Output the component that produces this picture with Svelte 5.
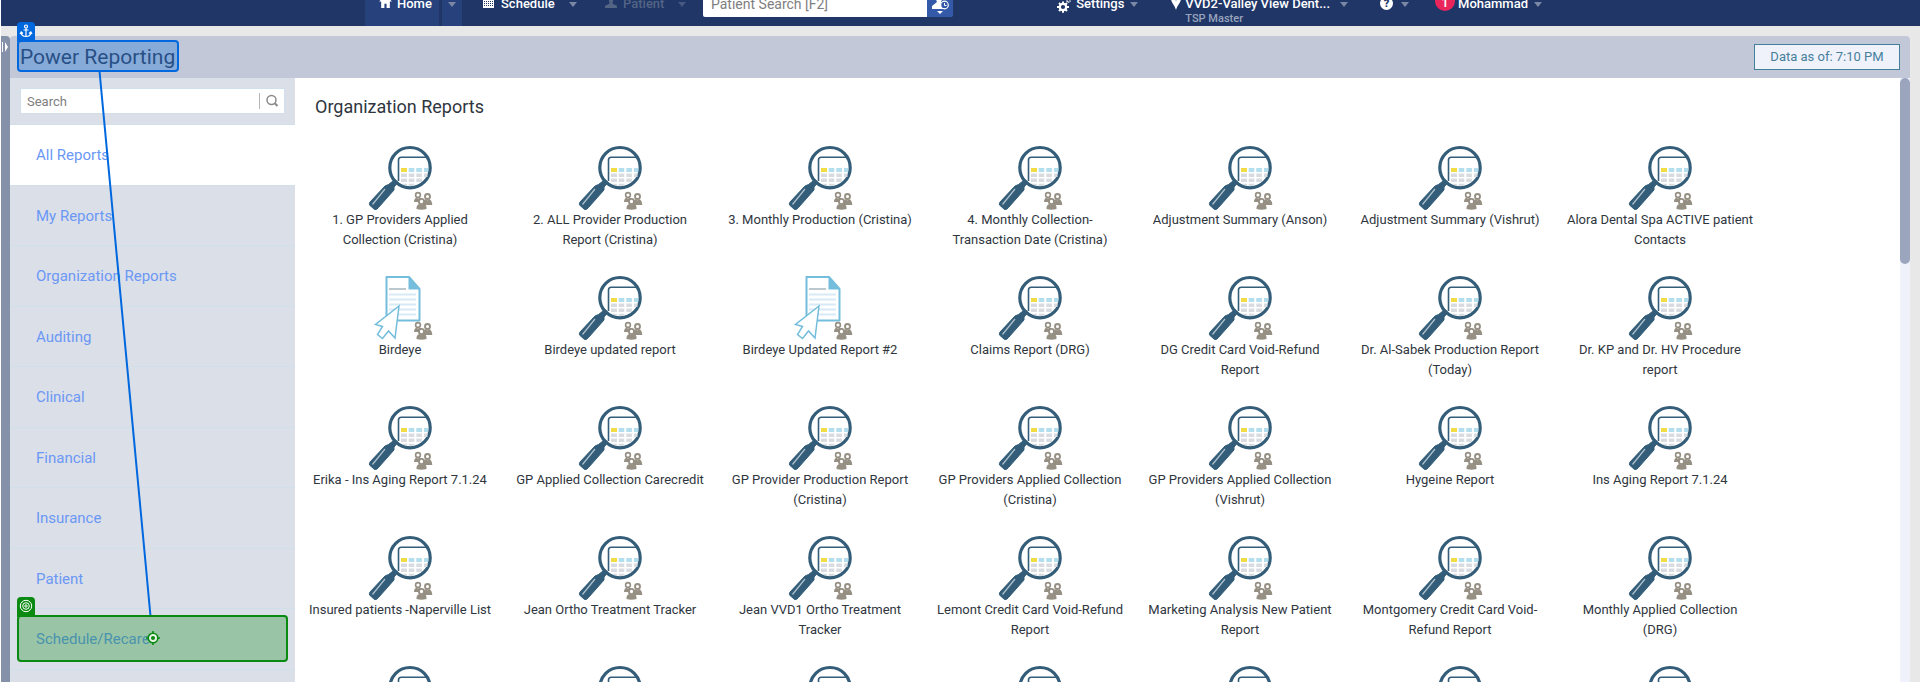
<script>
  const reports = [
    '1. GP Providers Applied Collection (Cristina)',
    '2. ALL Provider Production Report (Cristina)',
    '3. Monthly Production (Cristina)',
    '4. Monthly Collection-Transaction Date (Cristina)',
    'Adjustment Summary (Anson)',
    'Adjustment Summary (Vishrut)',
    'Alora Dental Spa ACTIVE patient Contacts',
    'Birdeye',
    'Birdeye updated report',
    'Birdeye Updated Report #2',
    'Claims Report (DRG)',
    'DG Credit Card Void-Refund Report',
    'Dr. Al-Sabek Production Report (Today)',
    'Dr. KP and Dr. HV Procedure report',
    'Erika - Ins Aging Report 7.1.24',
    'GP Applied Collection Carecredit',
    'GP Provider Production Report (Cristina)',
    'GP Providers Applied Collection (Cristina)',
    'GP Providers Applied Collection (Vishrut)',
    'Hygeine Report',
    'Ins Aging Report 7.1.24',
    'Insured patients -Naperville List',
    'Jean Ortho Treatment Tracker',
    'Jean VVD1 Ortho Treatment Tracker',
    'Lemont Credit Card Void-Refund Report',
    'Marketing Analysis New Patient Report',
    'Montgomery Credit Card Void-Refund Report',
    'Monthly Applied Collection (DRG)',
    '', '', '', '', '', '', ''
  ];
  const documents = new Set(['Birdeye', 'Birdeye Updated Report #2']);
  const categories = [
    'All Reports', 'My Reports', 'Organization Reports', 'Auditing', 'Clinical',
    'Financial', 'Insurance', 'Patient', 'Schedule/Recare', ''
  ];
  let selected = $state('All Reports');
</script>

{#snippet people()}
  <g fill="#968f83">
    <circle cx="53" cy="50" r="2.4" fill="#fff" stroke="#968f83" stroke-width="1.6" />
    <path d="M49 57q0-4 3-4.500l1 1.500 1-1.500q3 .5 3.500 4.500z" />
    <circle cx="62.500" cy="51.500" r="2.500" fill="#fff" stroke="#968f83" stroke-width="1.900" />
    <path d="M58 60q0-5 3-6l1.500 1.500L64 54q3 1 3.300 6z" />
    <circle cx="56.500" cy="56.500" r="2.600" fill="#fff" stroke="#968f83" stroke-width="1.900" />
    <path d="M51.500 64v-1.500q.5-3.500 3.500-3.500l1.500 1 1.500-1q3.500 0 3.500 3.500V64q-5 1.500-10 0z" />
  </g>
{/snippet}

<div class="app">
  <header>
    <nav class="left" aria-label="Main">
      <div class="tab home">
        <svg width="13" height="13" viewBox="0 0 12 12"><path fill="#fff" d="M6 0 0 6h2v6h3V8h2v4h3V6h2L10 4V1H9v2z" /></svg>
        <a href="#home">Home</a>
      </div>
      <button class="drop homedrop" aria-label="Home menu"></button>
      <div class="tab schedule">
        <svg width="11" height="13" viewBox="0 0 11 13"><path fill="#fff" d="M0 1h11v12H0z" /><path stroke="#1f3667" stroke-dasharray="1 1" d="M1 6.500h9M1 8.500h9M1 10.500h9" /></svg>
        <a href="#schedule">Schedule</a>
      </div>
      <button class="drop" aria-label="Schedule menu"></button>
      <div class="tab patient">
        <svg width="12" height="13" viewBox="0 0 11 12"><path fill="#536484" d="M5.500 0C3 0 3 4 4 6.500L4 8 0 10v2h11v-2L7 8V6.500C8 4 8 0 5.500 0z" /></svg>
        <a href="#patient">Patient</a>
      </div>
      <button class="drop dim" aria-label="Patient menu"></button>
      <div class="lookup">
        <input type="text" aria-label="Patient Search" placeholder="Patient Search [F2]" />
        <button aria-label="Recent patients">
          <svg width="26" height="30" viewBox="0 0 26 30"><path fill="#fff" d="M12 6c-4 0-4 5-2 9l-5 4v3h13v-6l-4-1c2-4 2-9-2-9zM10 24h6l-3 3z" /><circle cx="17.500" cy="18" r="3.800" fill="#3459a8" stroke="#fff" stroke-width="1.200" /><path fill="none" stroke="#fff" d="M17.500 16v2.500h2" /></svg>
        </button>
      </div>
    </nav>
    <nav class="right" aria-label="Account">
      <div class="tab settings">
        <svg width="14" height="16" viewBox="0 0 14 16"><circle cx="6" cy="10" r="3.200" fill="none" stroke="#fff" stroke-width="2.200" /><path stroke="#fff" stroke-width="2" d="M6 4.500v2M6 13.500v2.300M0 10h2.500M9.500 10H12M2 6l1.500 1.500M8.500 12.500 10 14M2 14l1.500-1.500M8.500 7.500 10 6" /><circle cx="11.500" cy="3.500" r="1.600" fill="none" stroke="#fff" stroke-dasharray="1 .5" stroke-width="1.500" /></svg>
        <a href="#settings">Settings</a>
      </div>
      <button class="drop" aria-label="Settings menu"></button>
      <div class="tab location">
        <svg width="10" height="17" viewBox="0 0 8 14"><path fill="#fff" fill-rule="evenodd" d="M4 0a4 4 0 0 0-4 5c0 3 3 5 4 9 1-4 4-6 4-9a4 4 0 0 0-4-5zm0 3a1.500 1.500 0 1 1 0 3 1.500 1.500 0 0 1 0-3z" /></svg>
        <div><a href="#location">VVD2-Valley View Dent...</a><small>TSP Master</small></div>
      </div>
      <button class="drop" aria-label="Location menu"></button>
      <div class="tab help"><span class="question">?</span></div>
      <button class="drop" aria-label="Help menu"></button>
      <div class="tab user"><span class="badge">1</span><a href="#user">Mohammad</a></div>
      <button class="drop" aria-label="User menu"></button>
    </nav>
  </header>

  <div class="body">
    <button class="strip" aria-label="Expand panel">
      <svg width="9" height="12" viewBox="0 0 9 12"><path fill="#fff" d="M1 1h1v10H1zM4 1l3 5-3 5z" /></svg>
    </button>
    <main>
      <div class="titlebar">
        <h1>Power Reporting</h1>
        <button class="asof">Data as of: 7:10 PM</button>
      </div>
      <div class="columns">
        <aside>
          <div class="search">
            <input type="text" aria-label="Search" placeholder="Search" />
            <button aria-label="Run search"><svg width="14" height="14" viewBox="0 0 14 14" fill="none" stroke="#8a8a8a"><circle cx="6.500" cy="6" r="4.500" stroke-width="1.500" /><path stroke-width="2" d="m9.500 9 3 3" /></svg></button>
          </div>
          <ul>
            {#each categories as name}
              <li class:active={selected === name}><a href="#reports" onclick={() => (selected = name)}>{name}</a></li>
            {/each}
          </ul>
        </aside>
        <section>
          <h2>Organization Reports</h2>
          <div class="reports">
            {#each reports as name}
              <a class="report" href="#open">
                {#if documents.has(name)}
                  <svg width="70" height="65" viewBox="0 0 70 65">
                    <path d="M21.500 2H44l10.500 12v31.500h-33z" fill="#fff" stroke="#74bddc" stroke-width="2" stroke-linejoin="round" />
                    <path d="M43.500 1.500 55 14v.5H43.500z" fill="#74bddc" />
                    <path d="M24 14h17" stroke="#bdc8ce" stroke-width="2" />
                    <path d="M24 19.500h27M24 24.500h27M24 29.500h27M24 34.500h27M24 39.500h27" stroke="#d7eaf5" stroke-width="2" />
                    <path d="m34 31-23.500 18.500 7 2-5 8 5 4 6-7.500 6.500 7z" fill="#fff" stroke="#74bddc" stroke-width="1.500" />
                    {@render people()}
                  </svg>
                {:else}
                  <svg width="70" height="65" viewBox="0 0 70 65">
                    <circle cx="45" cy="22.700" r="20.200" fill="#fff" stroke="#335d78" stroke-width="3.200" />
                    <path d="M33.500 36V15q0-2.700 2.700-2.700H61" fill="none" stroke="#335d78" stroke-width="1.600" />
                    <path d="M36 23h6v4h-6z" fill="#f1dc44" />
                    <path d="M43.700 23h5.600v4h-5.600zM51.300 23h5.600v4h-5.600zM59 23h4.200v4H59z" fill="#b3deed" />
                    <path d="M36 28.500h6V32h-6zM43.700 28.500h5.600V32h-5.600zM51.300 28.500h5.600V32h-5.600zM59 28.500h3.500V32H59zM36 33.500h6V37h-6zM43.700 33.500h5.600V37h-5.600zM51.300 33.500h5.600V37h-5.600zM37 38.700h5v1.500h-3zM43.700 38.700h5.600V41h-5.600z" fill="#d8dce1" />
                    <path d="m30 34.500 3 3-4 4.500v3L13.500 62.500q-1.500 2.500-4 2l-5-4.500q-.5-1 .5-3l15-16 3.500-1.500z" fill="#335d78" stroke="#335d78" />
                    <path d="M7.500 59.500 20 44" stroke="#b3c5d1" stroke-width="1.200" />
                    {@render people()}
                  </svg>
                {/if}
                <span>{name}</span>
              </a>
            {/each}
          </div>
          <div class="scroll"><div class="thumb"></div></div>
        </section>
      </div>
    </main>
  </div>

  <svg class="connector" width="200" height="682" viewBox="0 0 200 682"><path d="M99.500 71 150.500 616" stroke="#0068df" stroke-width="2" /></svg>
  <div class="mark source">
    <i><svg width="14" height="14" viewBox="0 0 14 14" fill="none" stroke="#fff" stroke-width="1.200"><circle cx="7" cy="2.500" r="1.500" /><path d="M7 4v8.500M4.500 6h5M2 8.500q.5 4 5 4t5-4M1 10l1.200-2 1.800 1.500M13 10l-1.200-2L10 9.500" /></svg></i>
  </div>
  <div class="mark target">
    <i><svg width="14" height="14" viewBox="0 0 14 14" fill="none" stroke="#fff"><circle cx="7" cy="7" r="5.700" /><circle cx="7" cy="7" r="3.300" /><circle cx="7" cy="7" r="1.200" /></svg></i>
    <svg class="cross" width="14" height="14" viewBox="0 0 14 14"><circle cx="7" cy="7" r="4.800" fill="#e6f3e6" stroke="#0a8a10" stroke-width="1.600" /><circle cx="7" cy="7" r="2" fill="#0a8a10" /><path d="M7 0v2.500M7 11.500V14M0 7h2.500M11.500 7H14" stroke="#0a8a10" stroke-width="1.600" /></svg>
  </div>
</div>

<style>
  :global(body) { overflow: hidden; background: #fff; }
  * { box-sizing: border-box; }
  .app { position: relative; display: flex; flex-direction: column; height: 100vh; overflow: hidden; padding-left: 1px; background: #fff; font-family: Roboto, sans-serif; color: #2f3640; }
  a { color: inherit; text-decoration: none; }
  svg { flex: none; }
  button { border: 0; padding: 0; font: inherit; background: none; }
  input { font: inherit; border: 0; outline: 0; min-width: 0; }
  input::placeholder { color: #808080; opacity: 1; }

  header { flex: none; height: 60px; margin-top: -34px; display: flex; justify-content: space-between; background: #1f3667; color: #fff; font-size: 13px; font-weight: 500; line-height: 24px; }
  nav { display: flex; }
  nav > * { flex: none; }
  .left { padding-left: 364px; }
  .right { padding-right: 372px; }
  .tab { display: flex; align-items: flex-start; padding-top: 26px; white-space: nowrap; }
  .tab > svg { margin-top: 3px; }
  .drop { width: 20px; height: 60px; display: flex; justify-content: center; align-items: flex-start; padding-top: 36px; }
  .drop::after { content: ''; border: 4px solid transparent; border-top: 5px solid #7b88a5; border-bottom: 0; }
  .drop.dim::after { border-top-color: #465980; }
  .home { background: #26417c; gap: 5px; padding-left: 14px; width: 74px; }
  .homedrop { background: #26417c; margin-left: 3px; }
  .schedule { padding-left: 21px; gap: 7px; width: 101px; }
  .patient { padding-left: 22px; gap: 6px; width: 89px; color: #536484; }
  .lookup { display: flex; height: 30px; margin: 21px 0 0 11px; border-radius: 2px; overflow: hidden; }
  .lookup input { width: 224px; padding: 4px 8px 0; background: #fff; color: #555; font-size: 14px; font-weight: 400; }
  .lookup button { width: 26px; background: #3459a8; }
  .lookup svg { display: block; }
  .settings { gap: 5px; }
  .settings > svg { margin-top: 5px; }
  .location { padding-left: 27px; gap: 4px; }
  .location a { display: block; }
  .location > svg { margin-top: 1px; }
  small { display: block; margin-top: -2px; font-size: 11px; line-height: 10px; color: #9aa5bd; }
  .location + .drop { margin-left: 4px; }
  .help { padding-left: 26px; padding-right: 2px; }
  .question { width: 13px; height: 13px; margin-top: 5px; border-radius: 50%; background: #fff; color: #1f3667; font-size: 11px; font-weight: 900; line-height: 13px; text-align: center; }
  .user { padding-left: 20px; gap: 3px; }
  .badge { width: 20px; height: 20px; margin-top: -1px; border-radius: 50%; background: #e9265b; text-align: center; }

  .body { flex: 1; min-height: 0; display: flex; padding: 10px 10px 0 0; background: #e8e8e8; }
  .strip { width: 9px; flex: none; background: #8590a9; display: flex; align-items: flex-start; padding-top: 5px; border-radius: 0 4px 0 0; }
  main { flex: 1; min-width: 0; display: flex; flex-direction: column; }
  .titlebar { height: 42px; flex: none; display: flex; align-items: center; justify-content: space-between; padding: 0 10px 0 10px; background: #c2c8d8; border-radius: 4px 4px 0 0; }
  h1 { margin: 0; font-size: 21px; line-height: 24px; font-weight: 400; color: #3a4460; }
  .asof { width: 146px; height: 26px; padding-bottom: 2px; border: 1px solid #467f9c; background: #eff2fb; color: #467f9c; font-size: 13px; }
  .columns { flex: 1; min-height: 0; display: flex; }
  aside { width: 285px; flex: none; background: #dbdfe8; overflow: hidden; }
  .search { display: flex; align-items: center; height: 26px; margin: 10px 10px 10px; background: #fff; border: 1px solid #d0dfea; }
  .search input { flex: 1; height: 24px; padding: 1px 6px 0; font-size: 13px; background: transparent; }
  .search button { width: 25px; height: 16px; border-left: 1px solid #b5b5b5; display: flex; align-items: center; justify-content: center; }
  ul { list-style: none; margin: 0; padding: 0; }
  li { border-top: 1px solid #d0e0ea; font-size: 15px; line-height: 1.3; color: #6b98f5; }
  li a { display: block; padding: 21px 26px 19px; }
  li.active { background: #fff; }
  section { position: relative; flex: 1; min-width: 0; padding: 19px 10px 0 0; background: #fff; overflow: hidden; }
  h2 { margin: 0 0 28px 20px; font-size: 18px; line-height: 20px; font-weight: 400; }
  .reports { display: flex; flex-wrap: wrap; }
  .report { width: 210px; height: 130px; display: flex; flex-direction: column; align-items: center; padding: 0 10px; text-align: center; font-size: 13px; line-height: 20px; }
  .scroll { position: absolute; top: 0; right: 0; bottom: 0; width: 10px; background: #eff2fb; }
  .thumb { height: 186px; border-radius: 5px; background: #9ba5be; }

  .connector { position: absolute; left: 0; top: 0; pointer-events: none; }
  .mark { position: absolute; left: 17px; border: 2px solid; border-radius: 4px; pointer-events: none; }
  .mark i { position: absolute; left: -2px; top: -20px; width: 18px; height: 20px; display: flex; justify-content: center; padding-top: 2px; border-radius: 4px 4px 0 0; }
  .source { top: 40px; width: 162px; height: 32px; border-color: #0068df; background: rgba(0, 105, 220, .3); }
  .source i { background: #0068df; }
  .target { top: 615px; width: 271px; height: 47px; border-color: #0a8a10; background: rgba(0, 135, 10, .3); }
  .target i { background: #0a8a10; }
  .cross { position: absolute; left: 127px; top: 14px; }
</style>
